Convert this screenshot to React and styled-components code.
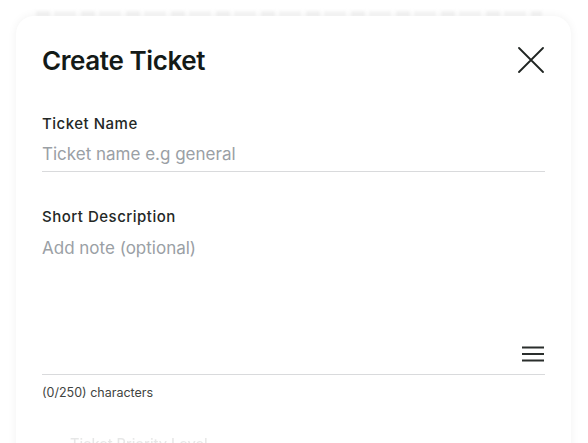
import styled, { createGlobalStyle } from 'styled-components';

const GlobalStyle = createGlobalStyle`
  html, body {
    margin: 0;
    padding: 0;
    background: #ffffff;
    font-family: Inter, "Noto Sans", sans-serif;
    overflow: hidden;
  }
`;

const Page = styled.div`
  width: 588px;
  height: 443px;
  overflow: hidden;
  position: relative;
  background: #ffffff;
`;

const Backdrop = styled.div`
  position: absolute;
  top: 11px;
  left: 36px;
  right: 46px;
  height: 6px;
  background: repeating-linear-gradient(
    90deg,
    #f4f4f4 0 14px,
    transparent 14px 18px,
    #f7f7f7 18px 40px,
    transparent 40px 45px
  );
  filter: blur(1.8px);
`;

const Card = styled.div`
  position: relative;
  margin: 16px 17px 0 16px;
  background: #ffffff;
  border-radius: 18px;
  box-shadow: 0 0 10px rgba(0, 0, 0, 0.06);
  padding: 25px 26px 40px 26px;
  height: 520px;
  box-sizing: border-box;
`;

const Header = styled.div`
  display: flex;
  align-items: center;
  justify-content: space-between;
  height: 38px;
`;

const Title = styled.h2`
  margin: 0;
  font-size: 26px;
  font-weight: 600;
  letter-spacing: -0.4px;
  color: #141a17;
`;

const CloseButton = styled.button`
  border: none;
  background: none;
  padding: 0;
  width: 28px;
  height: 28px;
  display: flex;
  align-items: center;
  justify-content: center;
  cursor: pointer;
`;

const Field = styled.div`
  display: flex;
  flex-direction: column;
  margin-top: ${(props) => props.gap}px;
`;

const Label = styled.label`
  font-size: 15px;
  font-weight: 500;
  line-height: 20px;
  letter-spacing: 0.5px;
  color: #242826;
`;

const Input = styled.input`
  border: none;
  border-bottom: 1px solid #d9dadc;
  outline: none;
  padding: 0 0 4px 0;
  margin-top: 8px;
  font-family: inherit;
  font-size: 17px;
  line-height: 25px;
  color: #1b1f1d;

  &::placeholder {
    color: #9aa0a5;
  }
`;

const AreaBox = styled.div`
  display: flex;
  flex-direction: column;
  margin-top: 9px;
  border-bottom: 1px solid #d9dadc;
  height: 138px;
`;

const TextArea = styled.textarea`
  flex: 1;
  border: none;
  outline: none;
  resize: none;
  padding: 0;
  font-family: inherit;
  font-size: 17px;
  line-height: 25px;
  color: #1b1f1d;

  &::placeholder {
    color: #9aa0a5;
  }
`;

const Grip = styled.div`
  display: flex;
  justify-content: flex-end;
  padding: 0 1px 12px 0;
`;

const Counter = styled.div`
  margin-top: 10px;
  font-size: 12.5px;
  line-height: 16px;
  color: #3f4441;
`;

const NextLabel = styled.div`
  margin-top: 34px;
  font-size: 14.5px;
  font-weight: 500;
  line-height: 18px;
  color: #1b1f1d;
  opacity: 0.1;
  filter: blur(0.6px);
  padding-left: 28px;
`;

const App = () => {
  return (
    <>
      <GlobalStyle />
      <Page>
        <Backdrop />
        <Card>
          <Header>
            <Title>Create Ticket</Title>
            <CloseButton type="button" aria-label="Close">
              <svg width="26" height="26" viewBox="0 0 26 26">
                <path
                  d="M1 1 L25 25 M25 1 L1 25"
                  stroke="#1f2421"
                  strokeWidth="1.8"
                  strokeLinecap="round"
                />
              </svg>
            </CloseButton>
          </Header>

          <Field gap={35}>
            <Label>Ticket Name</Label>
            <Input placeholder="Ticket name e.g general" />
          </Field>

          <Field gap={35}>
            <Label>Short Description</Label>
            <AreaBox>
              <TextArea placeholder="Add note (optional)" />
              <Grip>
                <svg width="22" height="16" viewBox="0 0 22 16">
                  <path
                    d="M0 1.5 H22 M0 8 H22 M0 14.5 H22"
                    stroke="#2a2e2c"
                    strokeWidth="1.8"
                  />
                </svg>
              </Grip>
            </AreaBox>
            <Counter>(0/250) characters</Counter>
          </Field>

          <NextLabel>Ticket Priority Level</NextLabel>
        </Card>
      </Page>
    </>
  );
};

export default App;
